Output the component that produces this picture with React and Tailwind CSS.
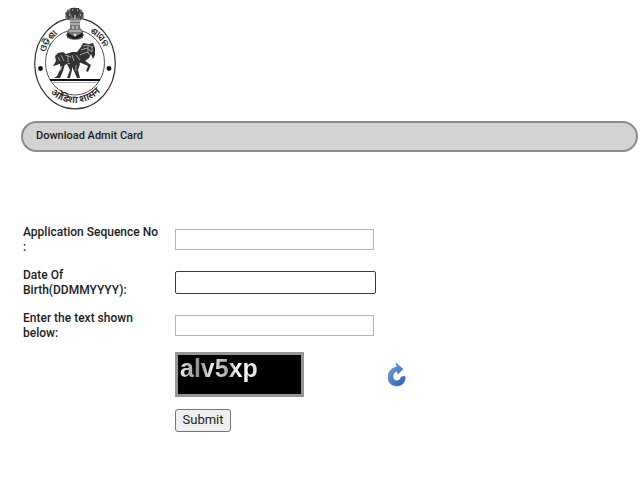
import React, { useState } from "react";

function Emblem() {
  return (
    <svg viewBox="0 0 82 104" className="block h-[104px] w-[82px]" role="img" aria-label="Government of Odisha">
      <defs>
        <path id="arcLeft" d="M 11 46 A 32 35 0 0 1 32 24" />
        <path id="arcRight" d="M 56 26 A 32 35 0 0 1 74 53" />
        <path id="arcBottom" d="M 15 86 A 38 41 0 0 0 70 82" />
      </defs>
      <ellipse cx="41" cy="57.500" rx="40.300" ry="45.300" fill="#fff" stroke="#333" strokeWidth="1.200" />
      <ellipse cx="41" cy="56.500" rx="29.500" ry="32.500" fill="#fff" stroke="#555" strokeWidth="1" />
      <circle cx="6.500" cy="62.500" r="2.400" fill="#111" />
      <circle cx="75" cy="62.500" r="2.400" fill="#111" />
      <g fill="#222" fontSize="9" fontFamily="Noto Sans, sans-serif" fontWeight="600">
        <text><textPath href="#arcLeft">ଓଡ଼ିଶା</textPath></text>
        <text><textPath href="#arcRight">ଶାସନ</textPath></text>
        <text fontSize="10"><textPath href="#arcBottom" startOffset="2">ओडिशा शासन</textPath></text>
      </g>
      <path d="M33 4Q40 -1 48 4L50 11 46 15 46 22 49 25V32Q41 36 33 32V25L36 22 36 15 31 11Z" fill="#777" />
      <path d="M37 2h8l1 4-3 6h-4l-3-6z" fill="#3a3a3a" />
      <path d="M31 7l4-2 2 6-3 3zM50 7l-4-2-2 6 3 3z" fill="#4a4a4a" />
      <path d="M35 15h12M36 18h10M35 25h12" stroke="#ddd" strokeWidth="1" />
      <path d="M38 4h1M43 4h1M35 9h1M46 9h1M41 9v4M39 20v3M43 20v3" stroke="#eee" strokeWidth="1" />
      <path d="M33 28q8 7 16 0" stroke="#222" strokeWidth="3" fill="none" />
      <circle cx="41" cy="29" r="1.500" fill="#ddd" />
      <path d="M16 74H66" stroke="#111" strokeWidth="2" />
      <path d="M17 76.500H65" stroke="#aaa" strokeWidth="1" />
      <path
        d="M21 50L24 47 29 46 32 48 38 46 43 46 47 41 49 37 55 38 59 37 61 42 61 49 59 53 57 48 55 52 51 55 47 56 44 59 39 58 35 57 31 59 27 57 23 59 19 60 22 55Z"
        fill="#333"
      />
      <path
        d="M25 56L27 62 23 70 20 72H26L29 65 31 58M36 57L40 65 43 72H46L44 64 46 58M33 58L36 64 33 72H36L38 64 38 57M45 56L54 60 52 65 54 66 57 59 50 54"
        fill="#333"
      />
      <path
        d="M49 40l5-1 5 3M47 44l6-2 5 4M46 49l7-3 3 3M34 49v7M38 49l2 6M27 49l3 6M42 49l4 5M31 49l6 2M54 39v8M58 40v6M24 51l2 4M28 60l-2 5M42 59v6"
        stroke="#bbb"
        strokeWidth=".8"
        fill="none"
      />
    </svg>
  );
}

function RefreshIcon() {
  return (
    <svg viewBox="0 0 18 24" className="block h-6 w-[18px]" aria-hidden="true">
      <defs>
        <linearGradient id="blue" x1="0" y1="0" x2="1" y2="1">
          <stop offset="0" stopColor="#7da6d6" />
          <stop offset="1" stopColor="#1f5fba" />
        </linearGradient>
      </defs>
      <path
        d="M8 0L15 6 10 11 9 8C6 9 4.500 12 5 14.500C6 19 12 19 13 14L17 13C18 20 13 23 9 23C3 23 0 19 0 14C0 9 3 5 9 4Z"
        fill="url(#blue)"
        stroke="#3d74b5"
        strokeWidth=".5"
      />
    </svg>
  );
}

function Field({ id, label, className, ...rest }) {
  return (
    <div className="grid min-h-[43px] grid-cols-[152px_1fr] items-center">
      <label htmlFor={id} className="w-[140px] text-[12px] leading-[15px] font-medium">
        {label}
      </label>
      <input id={id} type="text" className={"bg-white px-1 text-sm outline-none " + className} {...rest} />
    </div>
  );
}

export default function App() {
  const [seq, setSeq] = useState("");
  const [dob, setDob] = useState("");
  const [code, setCode] = useState("");
  return (
    <main className="min-h-screen bg-white pt-[6px] pr-[2px] pl-[21px] font-['Roboto',sans-serif] text-[#1c1c1c]">
      <header>
        <div className="pl-[13px]">
          <Emblem />
        </div>
        <h1 className="mt-[11px] h-[31px] rounded-full border-2 border-[#8c8c8c] bg-[#d3d3d3] pl-[13px] text-[11px] leading-[25px] font-medium">
          Download Admit Card
        </h1>
      </header>
      <form className="mt-[66px] pl-[2px]" onSubmit={(e) => e.preventDefault()}>
        <Field id="seq" label="Application Sequence No :" value={seq} onChange={(e) => setSeq(e.target.value)} className="h-[21px] w-[199px] border border-[#b5b5b5]" />
        <Field id="dob" label="Date Of Birth(DDMMYYYY):" value={dob} onChange={(e) => setDob(e.target.value)} className="h-[23px] w-[201px] rounded-[2px] border border-[#3c3c3c]" />
        <Field id="code" label="Enter the text shown below:" value={code} onChange={(e) => setCode(e.target.value)} className="h-[21px] w-[199px] border border-[#b5b5b5]" />
        <div className="mt-[5px] flex items-center pl-[152px]">
          <div className="h-[45px] w-[129px] border-[3px] border-[#959595] bg-black pl-[2px]">
            <span className="bg-[linear-gradient(90deg,#eee,#888_25%,#eee_40%,#aaa_60%,#fff_75%,#ddd)] bg-clip-text font-['Liberation_Sans',sans-serif] text-[25px] leading-[26px] font-bold text-transparent">
              alv5xp
            </span>
          </div>
          <button type="button" aria-label="Refresh the text" className="ml-[84px]">
            <RefreshIcon />
          </button>
        </div>
        <div className="mt-[10px] pl-[152px]">
          <button type="submit" className="h-[23px] w-[56px] rounded-[3px] border border-[#767676] bg-[#efefef] text-[13px] leading-5">
            Submit
          </button>
        </div>
      </form>
    </main>
  );
}
